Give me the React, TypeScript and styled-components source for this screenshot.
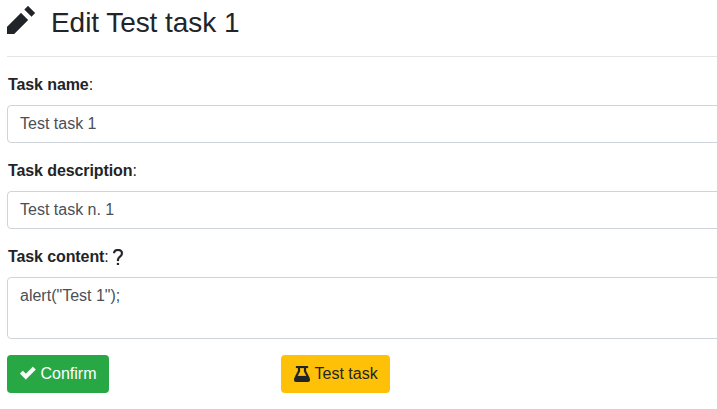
import React, { useState } from 'react';
import styled, { createGlobalStyle } from 'styled-components';

const GlobalStyle = createGlobalStyle`
  *, *::before, *::after { box-sizing: border-box; }
  body {
    margin: 0;
    background: #fff;
    color: #212529;
    font: 400 16px/1.5 "Liberation Sans", Arial, sans-serif;
    overflow: hidden;
  }
`;

const Page = styled.main`
  width: 740px;
  padding-left: 7px;
`;

const Header = styled.header`
  display: flex;
  height: 57px;
  padding-top: 6px;
  border-bottom: 1px solid #e5e5e5;
  margin-bottom: 16px;
`;

const Title = styled.h1`
  margin: 0 0 0 16px;
  font-size: 28px;
  font-weight: 400;
  line-height: 34px;
  letter-spacing: -0.06px;
`;

const Icon = styled.svg<{ $size: number }>`
  display: block;
  flex: none;
  width: ${p => p.$size}px;
  height: ${p => p.$size}px;
  fill: currentColor;
  stroke: currentColor;
  stroke-width: 0.1;
`;

const Field = styled.div`
  display: flex;
  flex-direction: column;
  margin-bottom: 16px;
`;

const Label = styled.label`
  display: flex;
  align-items: center;
  height: 24px;
  margin: 0 0 8px 1px;
`;

const LabelText = styled.strong`
  letter-spacing: -0.1px;
`;

const Help = styled.span`
  margin: 0 0 1px 4px;
`;

const Input = styled.input`
  height: 38px;
  padding: 6px 12px;
  border: 1px solid #ced4da;
  border-radius: 4px;
  color: #495057;
  font: inherit;
  outline: 0;
`;

const TextArea = styled.textarea`
  height: 62px;
  padding: 6px 12px;
  border: 1px solid #ced4da;
  border-radius: 4px;
  color: #495057;
  font: inherit;
  outline: 0;
  resize: none;
`;

const Actions = styled.div`
  display: grid;
  grid-template-columns: 274px auto;
  justify-items: start;
`;

const Button = styled.button<{ $variant: 'success' | 'warning' }>`
  display: flex;
  align-items: center;
  gap: 4.5px;
  height: 38px;
  padding: 0 12.5px 0 13px;
  border: 0;
  border-radius: 4px;
  background: ${p => (p.$variant === 'success' ? '#28a745' : '#ffc107')};
  color: ${p => (p.$variant === 'success' ? '#fff' : '#212529')};
  font: inherit;
  white-space: nowrap;
`;

const paths = {
  pencil: 'M6 0l-1 1 2 2 1-1-2-2zm-2 2l-4 4v2h2l4-4-2-2z',
  check: 'M6.41 .4l-.69.72-2.78 2.78-.81-.78-.72-.72-1.41 1.41.72.72 1.5 1.5.69.72.72-.72 3.5-3.5.72-.72-1.44-1.41z',
  question:
    'M2.47 0c-.85 0-1.48.26-1.88.66-.4.4-.54.9-.59 1.28l1 .13c.04-.25.12-.5.31-.69.19-.19.49-.38 1.16-.38.66 0 1.02.16 1.22.34.2.18.28.4.28.66 0 .83-.34 1.06-.84 1.5-.5.44-1.16 1.08-1.16 2.25v.25h1v-.25c0-.83.31-1.06.81-1.5.5-.44 1.19-1.08 1.19-2.25 0-.48-.17-1.02-.59-1.41-.43-.39-1.07-.59-1.91-.59zm-.5 7v1h1v-1h-1z',
  beaker:
    'M1.35 0a.5.5 0 0 0 .15 1H2v1.4C1.78 2.85 1.2 3.95.7 4.95.2 5.95 0 6.35 0 6.85 0 7.5.5 8 1.15 8h5.7C7.5 8 8 7.5 8 6.85c0-.5-.2-.9-.7-1.9C6.8 3.95 6.22 2.85 6 2.4V1h.5a.5.5 0 0 0 .15-1h-5.3zM3 1h2v1.63l.05.1C5.3 3.24 5.8 4.2 6.2 5H1.8c.4-.8.9-1.76 1.15-2.27L3 2.63V1z',
};

function Glyph({ name, size = 16 }: { name: keyof typeof paths; size?: number }) {
  return (
    <Icon $size={size} viewBox="0 0 8 8" aria-hidden="true">
      <path d={paths[name]} />
    </Icon>
  );
}

export default function App() {
  const [name, setName] = useState('Test task 1');
  const [description, setDescription] = useState('Test task n. 1');
  const [content, setContent] = useState('alert("Test 1");');

  return (
    <>
      <GlobalStyle />
      <Page>
        <Header>
          <Glyph name="pencil" size={28} />
          <Title>Edit Test task 1</Title>
        </Header>
        <Field>
          <Label htmlFor="name"><LabelText>Task name</LabelText>:</Label>
          <Input id="name" value={name} onChange={e => setName(e.target.value)} />
        </Field>
        <Field>
          <Label htmlFor="description"><LabelText>Task description</LabelText>:</Label>
          <Input id="description" value={description} onChange={e => setDescription(e.target.value)} />
        </Field>
        <Field>
          <Label htmlFor="content">
            <LabelText>Task content</LabelText>:
            <Help><Glyph name="question" /></Help>
          </Label>
          <TextArea id="content" value={content} onChange={e => setContent(e.target.value)} />
        </Field>
        <Actions>
          <Button $variant="success"><Glyph name="check" />Confirm</Button>
          <Button $variant="warning"><Glyph name="beaker" />Test task</Button>
        </Actions>
      </Page>
    </>
  );
}
